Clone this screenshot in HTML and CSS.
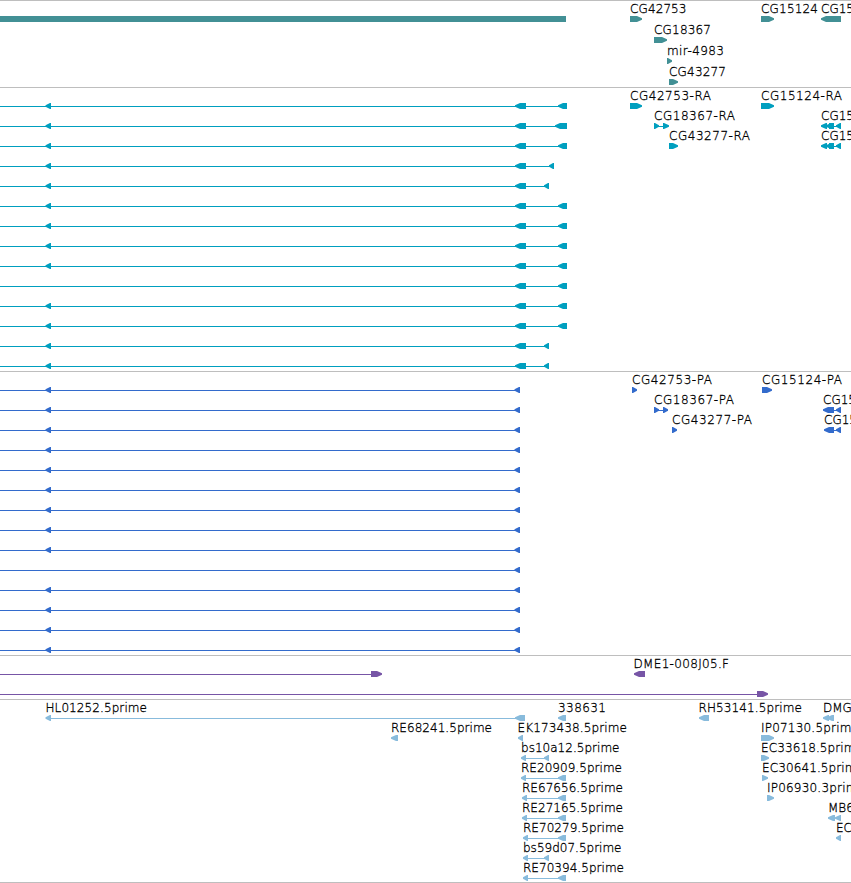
FILE: index.html
```html
<!DOCTYPE html>
<html lang="en">
<head>
    <meta charset="UTF-8">
    <title>Genome tracks</title>
    <link rel="stylesheet" href="styles.css">
</head>
<body>
    <div class="browser">
        <div class="track genes"><svg id="genes" width="851" height="86"></svg></div>
        <div class="track transcripts"><svg id="transcripts" width="851" height="283"></svg></div>
        <div class="track proteins"><svg id="proteins" width="851" height="283"></svg></div>
        <div class="track bacs"><svg id="bacs" width="851" height="43"></svg></div>
        <div class="track ests"><svg id="ests" width="851" height="182"></svg></div>
    </div>
    <script src="tracks.js"></script>
</body>
</html>
```

FILE: styles.css
```css
body {
    margin: 0;
    background: #fff;
    overflow: hidden;
}

.browser {
    width: 851px;
    border-bottom: 1px solid #bebebe;
}

.track {
    border-top: 1px solid #bebebe;
}

.track svg {
    display: block;
}

.track text {
    font-family: "DejaVu Sans Light", "DejaVu Sans", "Liberation Sans", sans-serif;
    font-weight: 200;
    font-size: 12px;
    fill: #000;
    stroke: #000;
    stroke-width: 0.3px;
}

.genes { fill: #429095; }
.transcripts { fill: #009fbf; }
.proteins { fill: #336bcc; }
.bacs { fill: #7755a6; }
.ests { fill: #88bbdc; }

.line {
    shape-rendering: crispEdges;
}
```

FILE: tracks.js
```js
const NS = "http://www.w3.org/2000/svg";

function add(svg, tag, attrs) {
    const el = document.createElementNS(NS, tag);
    for (const k in attrs) el.setAttribute(k, attrs[k]);
    svg.appendChild(el);
    return el;
}

// part: [start, end, dir]  dir "<" or ">" = arrow, "=" = block, "-" = thin line
function drawPart(svg, part, y) {
    const [a, b, dir] = part;
    if (dir === "-") {
        add(svg, "rect", { class: "line", x: a, y: y + 18, width: b - a, height: 1 });
        return;
    }
    if (dir === "=") {
        add(svg, "rect", { class: "line", x: a, y: y + 15, width: b - a, height: 6 });
        return;
    }
    const t = y + 15, m = y + 18, e = y + 21;
    const head = Math.min(6, b - a);
    let pts;
    if (dir === "<") {
        pts = [[a, m - 0.7], [a + head - 1, t], [b, t], [b, e], [a + head - 1, e], [a, m + 0.7]];
    } else {
        pts = [[b, m - 0.7], [b - head + 1, t], [a, t], [a, e], [b - head + 1, e], [b, m + 0.7]];
    }
    add(svg, "polygon", { points: pts.map(p => p.join(",")).join(" ") });
}

// feature: [row, parts, label, label x, label width]
function drawTrack(id, pitch, features) {
    const svg = document.getElementById(id);
    for (const [row, parts, label, x, width] of features) {
        const y = row * pitch;
        parts.forEach(p => drawPart(svg, p, y));
        if (label) {
            const attrs = { x: x + 0.5, y: y + 12 };
            if (width) attrs.textLength = width;
            add(svg, "text", attrs).textContent = label;
        }
    }
}

drawTrack("genes", 21, [
    [0, [[0, 566, "="]]],
    [0, [[630, 642, ">"]], "CG42753", 629.5, 56.5],
    [0, [[761, 774, ">"]], "CG15124", 760.5, 57],
    [0, [[821, 841, "<"]], "CG15", 820.5],
    [1, [[654, 667, ">"]], "CG18367", 653.5, 57],
    [2, [[667, 672, ">"]], "mir-4983", 666.5, 57],
    [3, [[669, 678, ">"]], "CG43277", 668.5, 57]
]);

const firstExon = [558, 555, 558, 549, 544, 558, 558, 558, 558, 558, 558, 558, 544, 544];
const transcripts = firstExon.map((x, i) => {
    const end = x === 549 ? 554 : x === 544 ? 549 : 567;
    const parts = [[0, end, "-"], [515, 526, "<"], [x, end, "<"]];
    if (i !== 9) parts.push([45.5, 51, "<"]);
    return [i, parts];
});
drawTrack("transcripts", 20, transcripts.concat([
    [0, [[630, 642, ">"]], "CG42753-RA", 629.5, 81],
    [0, [[761, 774, ">"]], "CG15124-RA", 760.5, 81],
    [1, [[654, 659, ">"], [654, 668, "-"], [663, 669, ">"]], "CG18367-RA", 653.5, 81],
    [1, [[821, 827, "<"], [826, 834, "<"], [829, 834, "="], [834, 841, "-"], [836, 841, "<"]], "CG15", 820.5],
    [2, [[669, 678, ">"]], "CG43277-RA", 668.5, 81],
    [2, [[821, 827, "<"], [826, 834, "<"], [829, 834, "="], [834, 841, "-"], [836, 841, "<"]], "CG15", 820.5]
]));

const proteins = firstExon.map((x, i) => {
    const parts = [[0, 520, "-"], [514.5, 520, "<"]];
    if (i !== 9) parts.push([45.5, 51, "<"]);
    return [i, parts];
});
drawTrack("proteins", 20, proteins.concat([
    [0, [[632, 637, ">"]], "CG42753-PA", 631.5, 80],
    [0, [[762, 772, ">"]], "CG15124-PA", 761.5, 80],
    [1, [[654, 659, ">"], [654, 668, "-"], [663, 668, ">"]], "CG18367-PA", 653.5, 80],
    [1, [[823, 829, "<"], [826, 834, "<"], [829, 834, "="], [834, 841, "-"], [836, 841, "<"]], "CG15", 822.5],
    [2, [[672, 677, ">"]], "CG43277-PA", 671.5, 80],
    [2, [[824, 830, "<"], [827, 834, "<"], [829, 834, "="], [834, 841, "-"], [836, 841, "<"]], "CG15", 823.5]
]));

drawTrack("bacs", 20, [
    [0, [[0, 371, "-"], [371, 382, ">"]]],
    [0, [[634, 645, "<"]], "DME1-008J05.F", 633, 95.5],
    [1, [[0, 757, "-"], [757, 768, ">"]]]
]);

drawTrack("ests", 20, [
    [0, [[45.5, 51, "<"], [50, 516, "-"], [515, 525, "<"]], "HL01252.5prime", 45, 101.5],
    [0, [[558, 566, "<"]], "338631", 557.5, 48],
    [0, [[699, 709, "<"]], "RH53141.5prime", 698, 103.5],
    [0, [[823, 829, "<"], [827, 834, "<"]], "DMG", 822.5],
    [1, [[391, 398, "<"]], "RE68241.5prime", 390.5, 101],
    [1, [[518, 523, "<"]], "EK173438.5prime", 517, 109.5],
    [1, [[761, 774, ">"]], "IP07130.5prime", 760.5, 98],
    [2, [[521, 526, "<"], [525, 549, "-"], [544, 549, "<"]], "bs10a12.5prime", 520.5, 98.5],
    [2, [[761, 769, ">"]], "EC33618.5prime", 760.5, 102],
    [3, [[521, 526, "<"], [525, 566, "-"], [558, 566, "<"]], "RE20909.5prime", 520.5, 101],
    [3, [[762, 768, ">"]], "EC30641.5prime", 761.5, 102],
    [4, [[522, 527, "<"], [526, 566, "-"], [558, 566, "<"]], "RE67656.5prime", 521.5, 101],
    [4, [[767, 774, ">"]], "IP06930.3prime", 766.5, 98],
    [5, [[522, 527, "<"], [526, 566, "-"], [558, 566, "<"]], "RE27165.5prime", 521.5, 101],
    [5, [[828, 835, "<"], [835, 841, "<"]], "MB6", 827.5],
    [6, [[523, 528, "<"], [527, 566, "-"], [558, 566, "<"]], "RE70279.5prime", 522.5, 101],
    [6, [[836, 841, "<"]], "EC", 835.5],
    [7, [[523, 528, "<"], [527, 549, "-"], [544, 549, "<"]], "bs59d07.5prime", 522.5, 98.5],
    [8, [[523, 528, "<"], [527, 566, "-"], [558, 566, "<"]], "RE70394.5prime", 522.5, 101]
]);
```
